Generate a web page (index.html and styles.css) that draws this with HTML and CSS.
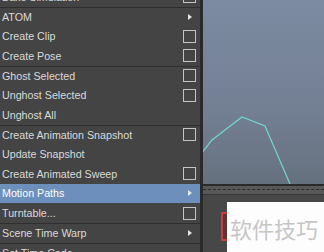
FILE: index.html
```html
<!DOCTYPE html>
<html>
<head>
    <title>Animate Menu</title>
    <link rel="stylesheet" href="styles.css">
</head>
<body>
    <div class="screen">
        <div class="menu">
            <div class="item"><span>Bake Simulation</span><i class="opt"></i></div>
            <div class="item sep"><span>ATOM</span><i class="sub"></i></div>
            <div class="item"><span>Create Clip</span><i class="opt"></i></div>
            <div class="item"><span>Create Pose</span><i class="opt"></i></div>
            <div class="item sep"><span>Ghost Selected</span><i class="opt"></i></div>
            <div class="item"><span>Unghost Selected</span><i class="opt"></i></div>
            <div class="item"><span>Unghost All</span></div>
            <div class="item sep"><span>Create Animation Snapshot</span><i class="opt"></i></div>
            <div class="item"><span>Update Snapshot</span></div>
            <div class="item"><span>Create Animated Sweep</span><i class="opt"></i></div>
            <div class="item active"><span>Motion Paths</span><i class="sub"></i></div>
            <div class="item"><span>Turntable...</span><i class="opt"></i></div>
            <div class="item sep"><span>Scene Time Warp</span><i class="sub"></i></div>
            <div class="item sep"><span>Set Time Code...</span></div>
        </div>
        <div class="side">
            <div class="viewport">
                <!-- motion curve -->
                <svg class="curve" viewBox="0 0 121 184">
                    <polyline points="-2,154 9,140 39,117 62,126 87,184" fill="none" stroke="#74d6cf" stroke-width="1.2"/>
                </svg>
            </div>
            <div class="timebar"><div class="dashes"></div></div>
            <div class="panel">
                <div class="marker"></div>
            </div>
            <div class="watermark">软件技巧</div>
        </div>
    </div>
</body>
</html>
```

FILE: styles.css
```css
body {
    margin: 0;
    background: #444444;
    font-family: "Liberation Sans", Arial, sans-serif;
    overflow: hidden;
}
.screen {
    display: flex;
    height: 252px;
    overflow: hidden;
}
.menu {
    width: 200px;
    flex-shrink: 0;
    margin-top: -13px;
    background: #444444;
}
.item {
    height: 19.67px;
    box-sizing: border-box;
    display: flex;
    align-items: center;
    justify-content: space-between;
    padding: 0 4px 0 2px;
    font-size: 10.7px;
    color: #dadada;
    white-space: nowrap;
}
.item.sep {
    border-top: 1px solid #2f2f2f;
}
.item.active {
    background: #6c90bb;
    color: #ffffff;
}
.opt {
    width: 13px;
    height: 13px;
    box-sizing: border-box;
    border: 1px solid #c4c4c4;
}
.sub {
    width: 13px;
    height: 6px;
    display: flex;
    justify-content: center;
}
.sub::before {
    content: "";
    border-left: 4px solid #e6e6e6;
    border-top: 3px solid transparent;
    border-bottom: 3px solid transparent;
}
.side {
    flex: 1;
    position: relative;
    display: flex;
    flex-direction: column;
    border-left: 3px solid #2a2a2a;
}
.viewport {
    height: 184px;
    flex-shrink: 0;
    background: linear-gradient(#7c8ba2, #737f93 60%, #66717f);
}
.curve {
    display: block;
    width: 100%;
    height: 100%;
}
.timebar {
    height: 8px;
    border-top: 2px solid #2a2a2a;
    border-bottom: 1px solid #383838;
    background: #585858;
}
.dashes {
    margin-top: 3px;
    border-top: 1px dashed #2c2c2c;
}
.panel {
    flex: 1;
    background: #474747;
    padding: 17px 0 0 18px;
}
.marker {
    width: 10px;
    height: 29px;
    box-sizing: border-box;
    border: 2px solid #cf3c3c;
    background: #5c3535;
}
.watermark {
    position: absolute;
    left: 24px;
    top: 202px;
    right: 0;
    bottom: 0;
    background: #fdfdfd;
    color: #c6c6c6;
    font-family: "Noto Sans CJK SC", sans-serif;
    font-size: 22px;
    line-height: 30px;
    padding: 11px 0 0 3px;
    white-space: nowrap;
}
```
